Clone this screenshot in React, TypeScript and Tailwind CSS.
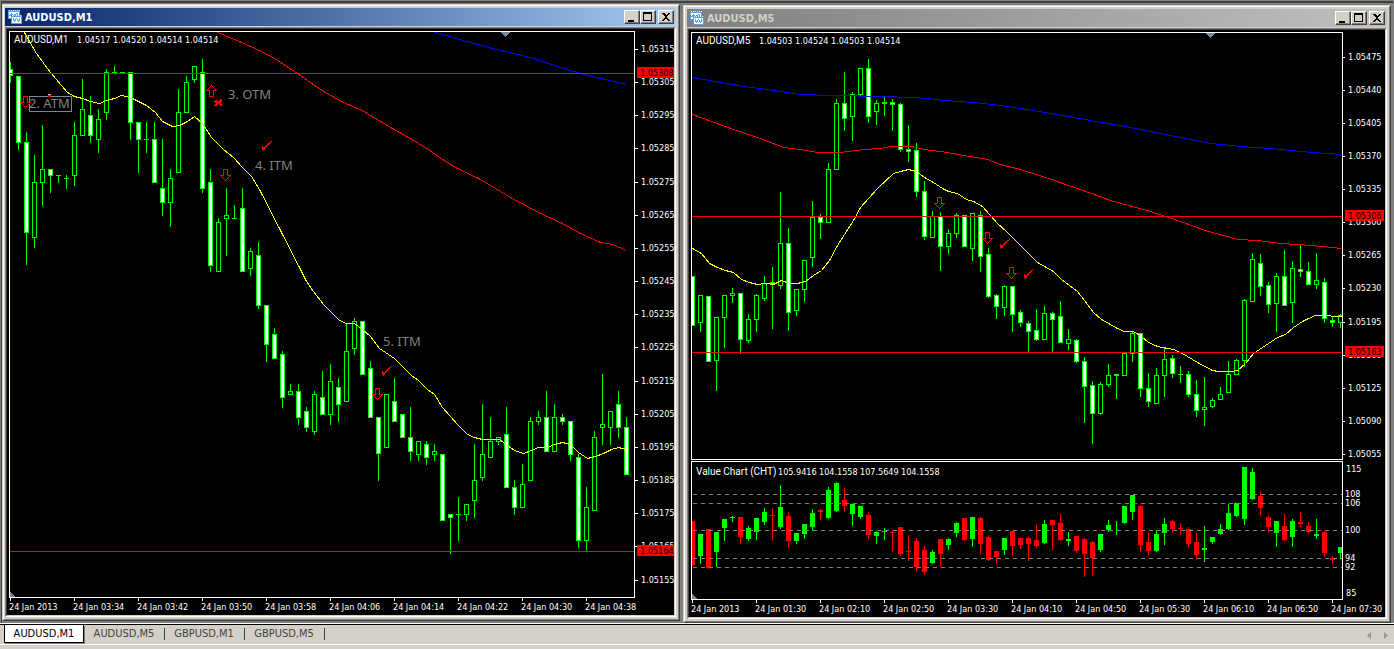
import React from "react";

type Candle = [high: number, top: number, bottom: number, low: number, kind: 0 | 1];
type Point = [number, number];

const STEP = 8;

const m1Candles: Candle[] = [
  [62, 69, 76, 83, 1], [76, 76, 143, 150, 1], [132, 142, 233, 265, 1], [155, 182, 238, 248, 0], [125, 169, 183, 206, 0],
  [169, 169, 176, 193, 1], [175, 175, 176, 183, 0], [175, 178, 179, 189, 0], [122, 135, 176, 186, 0], [79, 109, 136, 136, 0],
  [96, 115, 136, 143, 1], [109, 119, 140, 153, 0], [69, 72, 113, 120, 0], [66, 72, 73, 73, 0], [72, 72, 73, 73, 0],
  [72, 72, 123, 140, 1], [122, 122, 140, 173, 1], [122, 139, 140, 153, 0], [122, 139, 183, 183, 1], [139, 188, 203, 216, 1],
  [169, 178, 203, 227, 0], [89, 112, 173, 173, 0], [76, 82, 113, 113, 0], [66, 66, 80, 83, 0], [59, 72, 189, 193, 1],
  [169, 182, 266, 272, 1], [218, 222, 272, 272, 0], [188, 215, 219, 256, 0], [205, 218, 219, 219, 0], [188, 208, 272, 272, 1],
  [248, 251, 269, 276, 0], [242, 255, 306, 309, 1], [305, 305, 345, 362, 1], [328, 334, 359, 359, 1], [351, 354, 398, 408, 1],
  [384, 391, 395, 395, 0], [384, 391, 418, 425, 1], [407, 411, 428, 432, 1], [391, 394, 432, 435, 0], [371, 397, 415, 415, 1],
  [364, 381, 415, 425, 0], [378, 387, 405, 422, 1], [324, 351, 402, 402, 0], [318, 321, 349, 355, 0], [321, 321, 375, 375, 1],
  [361, 368, 418, 418, 1], [417, 417, 454, 481, 1], [394, 394, 448, 448, 0], [378, 401, 422, 422, 1], [414, 414, 438, 438, 1],
  [407, 437, 452, 461, 1], [441, 441, 455, 461, 0], [441, 444, 458, 465, 1], [444, 451, 455, 461, 0], [454, 454, 521, 521, 1],
  [514, 514, 518, 554, 1], [497, 514, 515, 541, 0], [504, 504, 515, 521, 0], [444, 480, 501, 518, 0], [404, 454, 478, 481, 0],
  [417, 441, 458, 458, 0], [437, 437, 442, 445, 0], [407, 434, 488, 488, 1], [480, 487, 508, 515, 1], [464, 484, 508, 508, 0],
  [417, 421, 481, 481, 0], [411, 417, 422, 425, 0], [391, 417, 452, 452, 1], [404, 417, 452, 452, 0], [414, 417, 422, 425, 1],
  [421, 421, 455, 461, 1], [454, 457, 541, 548, 1], [487, 507, 541, 551, 0], [431, 437, 511, 511, 0], [374, 424, 428, 445, 0],
  [411, 411, 428, 445, 0], [391, 404, 428, 438, 1], [417, 427, 475, 475, 1],
];

const m5Candles: Candle[] = [
  [276, 276, 326, 326, 1], [295, 295, 323, 332, 0], [296, 296, 362, 362, 1], [317, 317, 361, 391, 0], [295, 295, 318, 348, 0],
  [288, 293, 296, 303, 0], [293, 293, 340, 354, 1], [314, 319, 341, 343, 0], [294, 295, 320, 332, 0], [276, 283, 299, 301, 0],
  [267, 282, 285, 329, 1], [192, 243, 286, 289, 0], [228, 243, 313, 331, 1], [289, 289, 311, 316, 0], [260, 260, 290, 302, 0],
  [201, 217, 258, 267, 0], [214, 217, 223, 239, 1], [163, 169, 223, 223, 0], [99, 103, 170, 170, 0], [72, 103, 119, 131, 1],
  [92, 94, 117, 141, 0], [68, 68, 95, 97, 0], [59, 68, 117, 123, 1], [100, 103, 112, 125, 0], [97, 102, 104, 116, 1],
  [99, 102, 105, 131, 1], [103, 104, 150, 152, 1], [125, 149, 152, 162, 1], [143, 150, 192, 197, 1], [181, 191, 237, 240, 1],
  [211, 216, 238, 238, 0], [212, 216, 247, 271, 1], [229, 233, 247, 254, 0], [213, 215, 234, 238, 0], [215, 215, 247, 247, 1],
  [213, 213, 249, 261, 0], [211, 215, 257, 272, 1], [248, 254, 297, 298, 1], [294, 295, 307, 319, 1], [285, 286, 308, 316, 0],
  [286, 286, 315, 332, 1], [310, 312, 323, 327, 1], [321, 323, 332, 352, 1], [309, 330, 340, 341, 1], [306, 313, 340, 340, 0],
  [312, 313, 320, 352, 1], [301, 316, 343, 343, 1], [329, 339, 344, 350, 0], [339, 340, 362, 363, 1], [357, 361, 387, 423, 1],
  [381, 385, 414, 444, 1], [382, 384, 414, 415, 0], [364, 375, 385, 387, 0], [374, 374, 376, 399, 0], [353, 353, 376, 376, 0],
  [332, 333, 354, 362, 0], [333, 333, 389, 397, 1], [373, 388, 402, 407, 1], [368, 375, 404, 404, 0], [347, 359, 376, 397, 0],
  [355, 358, 374, 378, 1], [366, 374, 375, 383, 0], [371, 374, 395, 397, 1], [380, 394, 411, 417, 1], [377, 407, 410, 426, 0],
  [398, 400, 407, 408, 0], [387, 394, 400, 400, 0], [361, 374, 393, 393, 0], [359, 360, 375, 375, 0], [299, 300, 361, 367, 0],
  [253, 259, 302, 302, 0], [254, 263, 287, 296, 1], [282, 285, 305, 313, 1], [273, 276, 304, 332, 0], [250, 276, 306, 306, 1],
  [261, 268, 303, 323, 0], [245, 269, 272, 277, 1], [262, 271, 285, 285, 1], [253, 280, 285, 289, 0], [278, 282, 319, 323, 1],
  [316, 320, 323, 327, 1], [314, 315, 323, 328, 0],
];

// kind: 1 = falling (red), 0 = rising (green)
const valueBars: Candle[] = [
  [521, 521, 565, 566, 1], [534, 534, 556, 564, 0], [529, 529, 568, 569, 1], [532, 532, 552, 567, 0], [519, 519, 528, 541, 0],
  [516, 517, 518, 522, 0], [517, 517, 537, 544, 1], [526, 528, 539, 541, 0], [518, 518, 532, 540, 0], [508, 512, 522, 525, 0],
  [508, 515, 516, 541, 1], [485, 507, 527, 529, 0], [512, 516, 541, 548, 1], [533, 533, 541, 544, 0], [524, 524, 534, 539, 0],
  [509, 513, 527, 531, 0], [509, 510, 512, 520, 1], [487, 490, 518, 519, 0], [482, 483, 511, 512, 0], [488, 500, 506, 512, 1],
  [504, 504, 514, 526, 0], [506, 506, 517, 519, 0], [512, 515, 535, 539, 1], [531, 532, 536, 544, 0], [528, 531, 532, 540, 0],
  [530, 532, 533, 551, 1], [527, 527, 554, 556, 1], [535, 551, 552, 561, 1], [538, 541, 567, 571, 1], [546, 550, 572, 575, 1],
  [550, 552, 563, 564, 0], [539, 539, 554, 567, 1], [538, 539, 545, 550, 0], [522, 523, 533, 537, 0], [518, 518, 540, 541, 1],
  [517, 517, 539, 547, 0], [517, 518, 544, 554, 1], [535, 537, 560, 561, 1], [551, 551, 557, 564, 1], [538, 538, 550, 555, 0],
  [531, 531, 546, 556, 1], [538, 538, 545, 549, 1], [537, 538, 544, 561, 1], [525, 540, 546, 548, 1], [520, 524, 543, 544, 0],
  [520, 520, 525, 550, 1], [514, 523, 540, 541, 1], [532, 539, 541, 546, 0], [536, 536, 551, 553, 1], [538, 539, 554, 577, 1],
  [541, 542, 558, 575, 1], [534, 534, 550, 552, 0], [520, 525, 530, 532, 0], [521, 530, 530, 535, 0], [506, 506, 523, 524, 0],
  [495, 495, 512, 520, 0], [506, 506, 545, 552, 1], [533, 542, 551, 555, 1], [530, 534, 551, 552, 0], [518, 524, 533, 545, 0],
  [520, 521, 529, 533, 1], [523, 528, 529, 535, 1], [527, 529, 544, 547, 1], [533, 542, 555, 560, 1], [526, 548, 550, 562, 0],
  [537, 537, 542, 544, 0], [524, 529, 534, 535, 0], [504, 513, 529, 530, 0], [503, 503, 516, 517, 0], [467, 467, 519, 525, 0],
  [468, 472, 499, 500, 0], [491, 496, 508, 515, 1], [516, 517, 527, 533, 1], [521, 521, 533, 547, 0], [514, 526, 540, 541, 1],
  [519, 521, 537, 547, 0], [512, 522, 524, 527, 1], [522, 526, 532, 533, 1], [519, 534, 536, 539, 0], [531, 532, 553, 557, 1],
  [556, 558, 560, 564, 1], [547, 547, 553, 559, 0],
];

const m1Fast: Point[] = [
  [24, 32], [36, 53], [50, 72], [67, 92], [74, 96], [82, 98], [90, 101], [99, 103], [106, 100], [114, 98], [121, 95], [130, 97],
  [138, 101], [146, 105], [155, 112], [162, 121], [172, 126], [179, 125], [187, 121], [194, 116], [202, 123], [211, 137],
  [223, 149], [233, 157], [242, 167], [251, 176], [259, 189], [280, 230], [300, 269], [306, 281], [313, 291], [323, 304],
  [331, 312], [339, 320], [346, 323], [354, 323], [362, 329], [370, 336], [379, 348], [394, 358], [411, 375], [418, 380],
  [427, 389], [434, 394], [442, 407], [458, 425], [467, 434], [474, 437], [482, 439], [499, 439], [507, 445], [514, 450],
  [523, 453], [531, 450], [538, 447], [547, 447], [554, 444], [562, 442], [570, 444], [578, 452], [587, 458], [595, 456],
  [603, 453], [611, 449], [618, 447], [626, 449],
];
const m1Mid: Point[] = [
  [217, 32], [239, 41], [259, 50], [274, 58], [297, 73], [323, 91], [343, 102], [362, 110], [385, 124], [413, 140], [428, 149],
  [439, 157], [455, 167], [480, 179], [510, 197], [540, 213], [560, 222], [580, 233], [600, 242], [612, 244], [626, 250],
];
const m1Slow: Point[] = [[435, 32], [470, 42], [500, 50], [530, 57], [560, 67], [580, 73], [600, 78], [626, 84]];

const m5Fast: Point[] = [
  [692, 248], [701, 253], [709, 263], [717, 267], [725, 270], [733, 272], [741, 279], [749, 282], [757, 284], [765, 283],
  [773, 284], [781, 280], [789, 283], [797, 283], [805, 281], [813, 275], [821, 270], [829, 260], [837, 245], [853, 220],
  [860, 207], [877, 188], [893, 173], [900, 171], [908, 169], [916, 171], [924, 177], [933, 182], [942, 188], [948, 191],
  [957, 193], [966, 199], [973, 201], [982, 206], [997, 223], [1006, 231], [1037, 262], [1053, 271], [1061, 279], [1077, 291],
  [1084, 300], [1093, 312], [1101, 319], [1117, 328], [1124, 331], [1133, 331], [1141, 336], [1148, 342], [1157, 346],
  [1173, 349], [1182, 353], [1197, 362], [1212, 370], [1218, 371], [1230, 371], [1237, 370], [1245, 363], [1253, 353],
  [1262, 347], [1277, 337], [1285, 334], [1293, 327], [1302, 321], [1308, 318], [1315, 315], [1327, 315], [1334, 316], [1341, 316],
];
const m5Mid: Point[] = [
  [692, 114], [733, 129], [760, 138], [783, 147], [800, 149], [817, 152], [840, 152], [863, 149], [880, 148], [890, 146],
  [912, 146], [923, 149], [947, 152], [963, 155], [987, 159], [1000, 164], [1020, 169], [1039, 175], [1080, 189], [1110, 200],
  [1150, 211], [1180, 221], [1205, 230], [1237, 239], [1258, 240], [1280, 243], [1312, 245], [1341, 248],
];
const m5Slow: Point[] = [
  [692, 77], [737, 85], [773, 90], [800, 94], [833, 95], [880, 96], [912, 97], [928, 98], [943, 100], [960, 101], [983, 103],
  [1007, 106], [1039, 111], [1090, 120], [1130, 127], [1180, 137], [1210, 143], [1240, 146], [1270, 148], [1300, 151], [1341, 154],
];

const numberText = "font-['DejaVu_Sans_Condensed','DejaVu_Sans',sans-serif] text-[9px]";
const nameText = "font-[Roboto,'Noto_Sans',sans-serif] text-[10px]";
const noteText = "font-['Noto_Sans','Open_Sans',sans-serif] text-[13px]";

function PriceCandles({ data, start }: { data: Candle[]; start: number }) {
  return (
    <g>
      {data.map(([h, t, b, l, kind], i) => {
        const x = start + i * STEP;
        const height = b - t;
        return (
          <g key={i}>
            <rect x={x} y={h} width={1} height={l - h} fill="#00ff00" />
            <rect x={x - 2} y={t} width={5} height={height} fill="#00ff00" />
            {height > 2 && (
              <rect x={x - 1} y={t + 1} width={3} height={height - 2} fill={kind === 1 ? "#ffffff" : "#000000"} />
            )}
          </g>
        );
      })}
    </g>
  );
}

function SolidBars({ data, start }: { data: Candle[]; start: number }) {
  return (
    <g>
      {data.map(([h, t, b, l, kind], i) => {
        const x = start + i * STEP;
        const fill = kind === 1 ? "#ff0000" : "#00ff00";
        return (
          <g key={i} fill={fill}>
            <rect x={x} y={h} width={1} height={l - h} />
            <rect x={x - 2} y={t} width={5} height={b - t} />
          </g>
        );
      })}
    </g>
  );
}

function Curve({ points, color }: { points: Point[]; color: string }) {
  return (
    <polyline
      points={points.map(([x, y]) => `${x + 0.5},${y + 0.5}`).join(" ")}
      fill="none"
      stroke={color}
      strokeWidth={1}
    />
  );
}

function Arrow({ x, y, up }: { x: number; y: number; up?: boolean }) {
  const d = up ? "M-2 11H2V5H5L0 0L-5 5H-2Z" : "M-2 0H2V6H5L0 11L-5 6H-2Z";
  return <path d={d} transform={`translate(${x + 0.5} ${y + 0.5})`} fill="none" stroke="#ff0000" />;
}

function Check({ x, y }: { x: number; y: number }) {
  return (
    <path
      d="M0 6L2 5L3 7L5 4L8 1L11 0L7 4L5 6L4 9L2 10L1 7Z"
      transform={`translate(${x} ${y})`}
      fill="#ff0000"
    />
  );
}

function Header({ name, values, y, nameX, xs }: { name: string; values: string[]; y: number; nameX: number; xs: number[] }) {
  return (
    <g fill="#ffffff">
      <text className={nameText} x={nameX} y={y}>{name}</text>
      {values.map((v, i) => (
        <text key={i} className={numberText} x={xs[i]} y={y}>{v}</text>
      ))}
    </g>
  );
}

function TimeAxis({ labels, start, y }: { labels: string[]; start: number; y: number }) {
  return (
    <g fill="#ffffff">
      {labels.map((label, i) => (
        <g key={label}>
          <rect x={start + i * 64} y={y} width={1} height={3} />
          <text className={numberText} x={start - 1 + i * 64} y={y + 12}>{label}</text>
        </g>
      ))}
    </g>
  );
}

function PriceAxis({ labels, x, first, step }: { labels: string[]; x: number; first: number; step: number }) {
  return (
    <g fill="#ffffff">
      {labels.map((label, i) => {
        const y = Math.round(first + i * step);
        return (
          <g key={label}>
            <rect x={x} y={y} width={3} height={1} />
            <text className={numberText} x={x + 6} y={y + 3}>{label}</text>
          </g>
        );
      })}
    </g>
  );
}

function PriceTag({ x, y, width, label }: { x: number; y: number; width: number; label: string }) {
  return (
    <g>
      <rect x={x} y={y} width={width} height={11} fill="#ff0000" />
      <text className={numberText} x={x + 3} y={y + 9} fill="#000000">{label}</text>
    </g>
  );
}

const m1Prices = [
  "1.05315", "1.05305", "1.05295", "1.05285", "1.05275", "1.05265", "1.05255", "1.05245", "1.05235",
  "1.05225", "1.05215", "1.05205", "1.05195", "1.05185", "1.05175", "1.05165", "1.05155",
];
const m5Prices = [
  "1.05475", "1.05440", "1.05405", "1.05370", "1.05335", "1.05300", "1.05265", "1.05230", "1.05195",
  "1.05160", "1.05125", "1.05090", "1.05055",
];
const m1Times = [
  "24 Jan 2013", "24 Jan 03:34", "24 Jan 03:42", "24 Jan 03:50", "24 Jan 03:58",
  "24 Jan 04:06", "24 Jan 04:14", "24 Jan 04:22", "24 Jan 04:30", "24 Jan 04:38",
];
const m5Times = [
  "24 Jan 2013", "24 Jan 01:30", "24 Jan 02:10", "24 Jan 02:50", "24 Jan 03:30", "24 Jan 04:10",
  "24 Jan 04:50", "24 Jan 05:30", "24 Jan 06:10", "24 Jan 06:50", "24 Jan 07:30",
];

function M1Chart() {
  return (
    <svg className="block h-auto w-full bg-black" viewBox="7 29 667 586" shapeRendering="crispEdges" role="img" aria-label="AUDUSD one minute chart">
      <clipPath id="m1-plot"><rect x={10} y={32} width={624} height={565} /></clipPath>
      <rect x={9.5} y={31.5} width={625} height={566} fill="none" stroke="#ffffff" />
      <g clipPath="url(#m1-plot)">
        <PriceCandles data={m1Candles} start={10} />
        <Curve points={m1Slow} color="#0000ff" />
        <Curve points={m1Mid} color="#ff0000" />
        <Curve points={m1Fast} color="#ffff00" />
        <rect x={10} y={73} width={624} height={1} fill="#ff0000" />
        <rect x={10} y={551} width={624} height={1} fill="#ff0000" />
        <path d="M500 32H511L505.500 37Z" fill="#778899" />
        <path d="M10 592L15 597H10Z" fill="#778899" />
      </g>
      <Header name="AUDUSD,M1" values={["1.04517", "1.04520", "1.04514", "1.04514"]} y={43} nameX={14} xs={[77, 113, 149, 185]} />
      <g fill="#808080">
        <text className={noteText} x={29} y={108}>2. ATM</text>
        <text className={noteText} x={228} y={99}>3. OTM</text>
        <text className={noteText} x={255} y={170}>4. ITM</text>
        <text className={noteText} x={383} y={346}>5. ITM</text>
      </g>
      <rect x={29.5} y={96.5} width={42} height={15} fill="none" stroke="#778899" />
      <rect x={48} y={94} width={3} height={3} fill="#c0c0c0" />
      <rect x={48} y={95} width={3} height={2} fill="#ff0000" />
      <Arrow x={25} y={96} />
      <Arrow x={211} y={85} up />
      <Arrow x={225} y={169} />
      <Arrow x={377} y={388} />
      <path d="M215 100H217L218 102L220 99H222V101L220 103L222 105V106H220L218 104L216 106H214V105L216 103L214 102Z" fill="#ff0000" />
      <Check x={261} y={141} />
      <Check x={381} y={366} />
      <PriceAxis labels={m1Prices} x={635} first={48.9} step={33.17} />
      <PriceTag x={637} y={67} width={37} label="1.05308" />
      <PriceTag x={637} y={545} width={37} label="1.05164" />
      <TimeAxis labels={m1Times} start={10} y={598} />
    </svg>
  );
}

const levels: [string, number][] = [["108", 494], ["106", 503], ["100", 530], ["94", 558], ["92", 567]];

function M5Chart() {
  return (
    <svg className="block h-auto w-full bg-black" viewBox="689 30 696 587" shapeRendering="crispEdges" role="img" aria-label="AUDUSD five minute chart">
      <clipPath id="m5-plot"><rect x={692} y={33} width={650} height={566} /></clipPath>
      <rect x={691.5} y={32.5} width={651} height={427} fill="none" stroke="#ffffff" />
      <rect x={691.5} y={461.5} width={651} height={138} fill="none" stroke="#ffffff" />
      <g clipPath="url(#m5-plot)">
        <PriceCandles data={m5Candles} start={692} />
        <Curve points={m5Slow} color="#0000ff" />
        <Curve points={m5Mid} color="#ff0000" />
        <Curve points={m5Fast} color="#ffff00" />
        <rect x={692} y={216} width={650} height={1} fill="#ff0000" />
        <rect x={692} y={352} width={650} height={1} fill="#ff0000" />
        <path d="M1205 33H1216L1210.500 38Z" fill="#778899" />
        <SolidBars data={valueBars} start={692} />
        {levels.map(([label, y]) => (
          <path key={label} d={`M693 ${y + 0.5}H1342`} stroke="#808080" strokeDasharray="4 4" />
        ))}
        <path d="M692 594L697 599H692Z" fill="#778899" />
      </g>
      <Header name="AUDUSD,M5" values={["1.04503", "1.04524", "1.04503", "1.04514"]} y={44} nameX={696} xs={[759, 795, 831, 867]} />
      <Header name="Value Chart (CHT)" values={["105.9416", "104.1558", "107.5649", "104.1558"]} y={475} nameX={696} xs={[778, 819, 860, 901]} />
      <Arrow x={939} y={197} />
      <Arrow x={987} y={232} />
      <Arrow x={1011} y={267} />
      <Check x={999} y={239} />
      <Check x={1023} y={269} />
      <PriceAxis labels={m5Prices} x={1342} first={56.7} step={33.1} />
      <g fill="#ffffff">
        <text className={numberText} x={1346} y={472}>115</text>
        {levels.map(([label, y]) => (
          <text key={label} className={numberText} x={1345} y={y + 3}>{label}</text>
        ))}
        <text className={numberText} x={1346} y={596}>85</text>
      </g>
      <PriceTag x={1345} y={210} width={39} label="1.05306" />
      <PriceTag x={1345} y={346} width={39} label="1.05163" />
      <TimeAxis labels={m5Times} start={692} y={600} />
    </svg>
  );
}

function ChartIcon() {
  return (
    <svg className="h-[14px] w-[14px]" viewBox="0 0 14 14" aria-hidden="true" shapeRendering="crispEdges">
      <rect x="0" y="0" width="12" height="9" fill="#5a9cf0" />
      <rect x="1" y="2" width="10" height="6" fill="#ffffff" />
      <path d="M1 5.500H2.500L3.500 3.500L5.500 6.500L7 4.500L9 3.500L10.500 5.500" fill="none" stroke="#5a9cf0" />
      <rect x="3" y="5" width="11" height="9" fill="#5a9cf0" />
      <rect x="4" y="7" width="9" height="6" fill="#ffffff" />
      <path d="M5 8.500L6.500 11.500L8.500 8.500L10.500 11.500L12 8.500" fill="none" stroke="#5a9cf0" />
      <path d="M1 0.500H12M4 5.500H14" stroke="#cfe4ff" strokeDasharray="1 1" />
    </svg>
  );
}

const captionButton =
  "flex h-[14px] w-4 items-center justify-center border border-t-white border-l-white border-r-[#404040] border-b-[#404040] bg-[#d4d0c8] shadow-[inset_-1px_-1px_0_#808080]";

function CaptionButtons() {
  return (
    <div className="flex">
      <button type="button" aria-label="Minimize" className={captionButton}>
        <svg className="h-3 w-3" viewBox="0 0 12 12" shapeRendering="crispEdges"><rect x="2" y="9" width="6" height="2" fill="#000" /></svg>
      </button>
      <button type="button" aria-label="Maximize" className={captionButton}>
        <svg className="h-3 w-3" viewBox="0 0 12 12" shapeRendering="crispEdges"><path d="M1 1H10V10H1ZM2 3V9H9V3Z" fill="#000" fillRule="evenodd" /></svg>
      </button>
      <button type="button" aria-label="Close" className={`${captionButton} ml-[2px]`}>
        <svg className="h-3 w-3" viewBox="0 0 12 12" shapeRendering="crispEdges"><path d="M2 2H4L6 4L8 2H10L7 6L10 10H8L6 7L4 10H2L5 6Z" fill="#000" /></svg>
      </button>
    </div>
  );
}

function ChartWindow({ title, active, children }: { title: string; active?: boolean; children: React.ReactNode }) {
  return (
    <section
      className={`min-w-0 self-start border border-t-[#d4d0c8] border-l-[#d4d0c8] border-r-[#404040] border-b-[#404040] ${active ? "" : "mt-px"}`}
    >
      <div
        className={`border border-t-white border-l-white border-r-[#808080] border-b-[#808080] bg-[#d4d0c8] pt-[2px] pr-[2px] pb-[2px] ${active ? "pl-px" : "pl-[2px]"}`}
      >
        <header
          className={`flex h-[18px] items-center justify-between pr-[2px] pl-[3px] ${
            active ? "bg-linear-to-r from-[#0a246a] to-[#a6caf0] text-white" : "bg-linear-to-r from-[#808080] to-[#c0c0c0] text-[#d4d0c8]"
          }`}
        >
          <div className="flex items-center gap-[3px]">
            <ChartIcon />
            <h2 className="pt-[2px] font-['DejaVu_Sans_Condensed','DejaVu_Sans',sans-serif] text-[11px] leading-4 font-bold">{title}</h2>
          </div>
          <CaptionButtons />
        </header>
        <div className="mt-px border border-t-[#808080] border-l-[#808080] border-r-white border-b-white">
          <div className="border border-t-[#404040] border-l-[#404040] border-r-[#d4d0c8] border-b-[#d4d0c8]">{children}</div>
        </div>
      </div>
    </section>
  );
}

const tabs = ["AUDUSD,M1", "AUDUSD,M5", "GBPUSD,M1", "GBPUSD,M5"];

export default function App() {
  return (
    <div className="flex min-h-screen flex-col bg-[#d4d0c8] font-['DejaVu_Sans_Condensed','DejaVu_Sans',sans-serif]">
      <main className="border-t border-l border-r border-[#808080] bg-[#808080]">
        <div className="grid grid-cols-[minmax(0,678fr)_minmax(0,708fr)] gap-[3px] border-t-2 border-l border-[#404040] pt-px pr-[2px]">
          <ChartWindow title="AUDUSD,M1" active>
            <M1Chart />
          </ChartWindow>
          <ChartWindow title="AUDUSD,M5">
            <M5Chart />
          </ChartWindow>
        </div>
      </main>
      <footer className="border-t border-white">
        <div className="flex h-[21px] items-start justify-between border-t border-b border-t-black border-b-white pl-1">
          <nav className="flex" role="tablist">
            {tabs.map((tab, i) => (
              <button
                key={tab}
                type="button"
                role="tab"
                aria-selected={i === 0}
                className={
                  i === 0
                    ? "h-[18px] w-20 border-x border-b border-black bg-white text-[11px] leading-[18px] text-black shadow-[1px_1px_0_#808080]"
                    : "relative h-[18px] w-20 text-[11px] leading-[18px] text-[#404040] after:absolute after:top-[3px] after:-right-px after:h-3 after:w-px after:bg-[#404040]"
                }
              >
                {tab}
              </button>
            ))}
          </nav>
          <div className="flex gap-2 pt-1 pr-1">
            <button type="button" aria-label="Scroll tabs left" className="flex h-3 w-[9px] items-center justify-center">
              <svg className="h-[7px] w-1" viewBox="0 0 4 7"><path d="M4 0V7L0 3.500Z" fill="#999" /></svg>
            </button>
            <button type="button" aria-label="Scroll tabs right" className="flex h-3 w-[9px] items-center justify-center">
              <svg className="h-[7px] w-1" viewBox="0 0 4 7"><path d="M0 0V7L4 3.500Z" fill="#999" /></svg>
            </button>
          </div>
        </div>
      </footer>
    </div>
  );
}
